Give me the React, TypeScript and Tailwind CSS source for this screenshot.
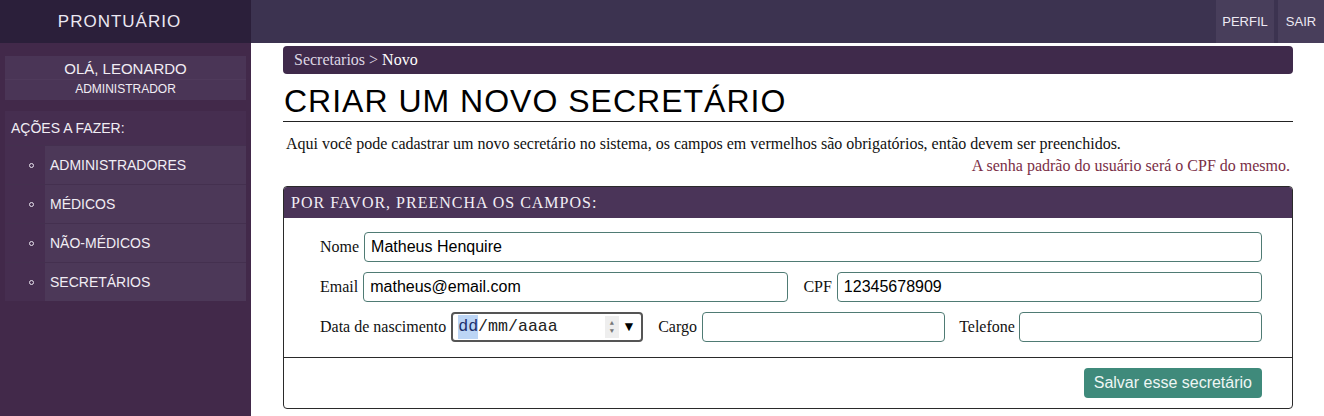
import { useState } from 'react';

const menuItems = ['ADMINISTRADORES', 'MÉDICOS', 'NÃO-MÉDICOS', 'SECRETÁRIOS'];

const sans = 'font-["Liberation_Sans",Arial,sans-serif]';
const serif = 'font-["Liberation_Serif","Times_New_Roman",serif]';

export default function App() {
  return (
    <div className={`flex h-[416px] w-[1324px] flex-col overflow-hidden bg-white ${sans}`}>
      <header className="flex h-[43px] shrink-0">
        <div className="flex w-[251px] items-center justify-center bg-[#2b1f3a] pr-3 text-[17px] tracking-[1px] text-[#ece8f2]">
          PRONTUÁRIO
        </div>
        <div className="flex flex-1 justify-end gap-1 bg-[#3c3350]">
          <TopButton label="PERFIL" width="w-[58px]" />
          <TopButton label="SAIR" width="w-[46px]" />
        </div>
      </header>

      <div className="flex flex-1">
        <Sidebar />
        <main className="flex-1 pl-8 pr-[31px] pt-[3px]">
          <div className={`flex h-[28px] items-center rounded bg-[#3f2a4b] px-[11px] text-base text-[#ddd6e3] ${serif}`}>
            Secretarios &gt;&nbsp;<span className="text-white">Novo</span>
          </div>
          <h1 className="mt-[9px] border-b border-[#222] pb-[2px] pl-px text-[32px] leading-[36px] tracking-[1px] text-black">
            CRIAR UM NOVO SECRETÁRIO
          </h1>
          <p className={`mt-[11px] pl-[3px] text-base leading-[22px] text-[#111] ${serif}`}>
            Aqui você pode cadastrar um novo secretário no sistema, os campos em vermelhos são obrigatórios, então devem ser
            preenchidos.
          </p>
          <p className={`pr-[3px] text-right text-base leading-[22px] text-[#7a2e46] ${serif}`}>
            A senha padrão do usuário será o CPF do mesmo.
          </p>
          <SecretaryForm />
        </main>
      </div>
    </div>
  );
}

function TopButton({ label, width }: { label: string; width: string }) {
  return (
    <button className={`flex h-[43px] items-center justify-center bg-[#483e5b] text-[13px] text-[#eeeaf3] ${width}`}>
      {label}
    </button>
  );
}

function Sidebar() {
  return (
    <aside className="w-[251px] shrink-0 bg-[#42294a] px-[5px] pt-[13px] text-[#f1edf4]">
      <div className="bg-[#4a3556]">
        <p className="pt-[3px] text-center text-[15px] leading-[20px]">OLÁ, LEONARDO</p>
        <p className="border-t border-[#4f3a5b] pb-[2px] text-center text-[12px] leading-[18px]">ADMINISTRADOR</p>
      </div>
      <div className="mt-[11px] bg-[#462e50]">
        <p className="px-[6px] text-[14px] leading-[34px]">AÇÕES A FAZER:</p>
        <ul>
          {menuItems.map((item) => (
            <li key={item} className="flex h-[39px] border-t border-[#44304f]">
              <span className="flex w-[40px] items-center justify-center pl-[12px] text-[#e8e2ee]">
                <span className="h-[5px] w-[5px] rounded-full border border-[#e8e2ee]" />
              </span>
              <span className="flex flex-1 items-center bg-[#4c3858] pl-[5px] text-[14px]">{item}</span>
            </li>
          ))}
        </ul>
      </div>
    </aside>
  );
}

function SecretaryForm() {
  const [nome, setNome] = useState('Matheus Henquire');
  const [email, setEmail] = useState('matheus@email.com');
  const [cpf, setCpf] = useState('12345678909');

  return (
    <section className="mt-[9px] overflow-hidden rounded border border-[#2a2a2a]">
      <div className={`flex h-[31px] items-center bg-[#4a3458] px-[7px] text-base tracking-[1px] text-[#f2eef5] ${serif}`}>
        POR FAVOR, PREENCHA OS CAMPOS:
      </div>
      <div className="flex flex-col gap-[10px] pb-[15px] pl-[36px] pr-[30px] pt-[14px]">
        <div className="flex items-center gap-[5px]">
          <Label text="Nome" />
          <TextInput value={nome} onChange={setNome} />
        </div>
        <div className="flex items-center">
          <Label text="Email" />
          <span className="w-[5px]" />
          <TextInput value={email} onChange={setEmail} />
          <span className="w-[15px]" />
          <Label text="CPF" />
          <span className="w-[5px]" />
          <TextInput value={cpf} onChange={setCpf} />
        </div>
        <div className="flex items-center">
          <Label text="Data de nascimento" />
          <span className="w-[5px]" />
          <DateField />
          <span className="w-[15px]" />
          <Label text="Cargo" />
          <span className="w-[5px]" />
          <TextInput value="" />
          <span className="w-[14px]" />
          <Label text="Telefone" />
          <span className="w-[4px]" />
          <TextInput value="" />
        </div>
      </div>
      <div className="flex justify-end border-t border-[#2a2a2a] pb-[10px] pr-[30px] pt-[10px]">
        <button className="h-[30px] rounded bg-[#3f8a7b] px-[10px] text-base text-[#eef6f4]">Salvar esse secretário</button>
      </div>
    </section>
  );
}

function Label({ text }: { text: string }) {
  return <label className={`shrink-0 text-base text-[#111] ${serif}`}>{text}</label>;
}

function TextInput({ value, onChange }: { value: string; onChange?: (v: string) => void }) {
  return (
    <input
      value={value}
      onChange={(e) => onChange?.(e.target.value)}
      className="h-[30px] min-w-0 flex-1 rounded border border-[#4f7b74] px-[6px] text-base text-black outline-none"
    />
  );
}

function DateField() {
  return (
    <div className="flex h-[30px] w-[192px] shrink-0 items-center rounded border-2 border-[#555] pl-[5px] pr-[8px] font-['Liberation_Mono',monospace] text-[16.6px] text-[#222]">
      <span className="bg-[#bcd5f5] text-[#1d2f6b]">dd</span>
      <span>/mm/aaaa</span>
      <span className="ml-auto flex h-[22px] w-[14px] flex-col items-center justify-center bg-[#eeeeee] text-[7px] leading-[8px] text-[#777]">
        <span>▲</span>
        <span>▼</span>
      </span>
      <span className="ml-[6px] text-[14px] text-black">▼</span>
    </div>
  );
}
